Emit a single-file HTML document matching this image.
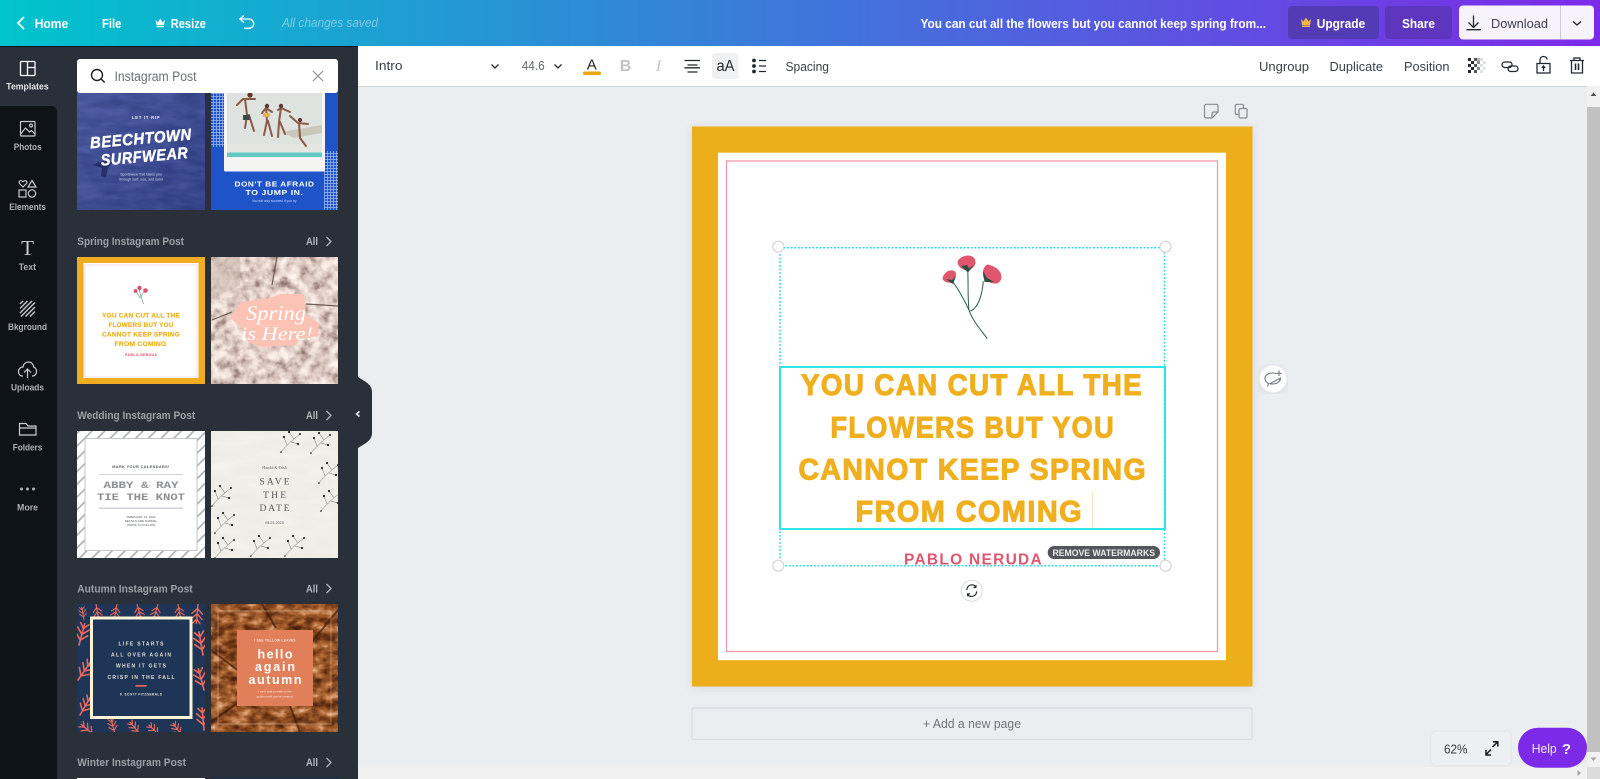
<!DOCTYPE html>
<html lang="en">
<head>
<meta charset="utf-8">
<title>You can cut all the flowers</title>
<style>
html,body{margin:0;padding:0;width:1600px;height:779px;overflow:hidden;background:#ebeef1}
svg{display:block;font-family:"Liberation Sans",sans-serif}
.b{font-weight:700}
.rail{font-size:9.5px;font-weight:700;fill:#aeb2b7}
.sec{font-size:11px;font-weight:700;fill:#9ca1a7}
.top{font-size:13px;font-weight:700;fill:#fff}
.tb{font-size:13px;fill:#3a4149}
.ic{fill:none;stroke:#c9ccd0;stroke-width:1.2}
.k{fill:none;stroke:#22282e;stroke-width:1.3}
</style>
</head>
<body>
<svg xmlns="http://www.w3.org/2000/svg" width="1600" height="779" viewBox="0 0 1600 779">
<defs>
<linearGradient id="tg" x1="0" x2="1" y1="0" y2="0"><stop offset="0" stop-color="#00c4cc"/><stop offset="1" stop-color="#7d2ae8"/></linearGradient>
<linearGradient id="wshade" x1="0" x2="1" y1="0" y2="1"><stop offset="0" stop-color="#5a68ac" stop-opacity=".3"/><stop offset="1" stop-color="#1d2a72" stop-opacity=".35"/></linearGradient>
<filter id="blossom" x="0" y="0" width="100%" height="100%" color-interpolation-filters="sRGB"><feTurbulence type="fractalNoise" baseFrequency=".1" numOctaves="3" seed="7"/><feColorMatrix type="matrix" values="1 0 0 0 0 1 0 0 0 0 1 0 0 0 0 0 0 0 0 1"/><feComponentTransfer><feFuncR type="table" tableValues=".5 .6 .82 .94 1 1"/><feFuncG type="table" tableValues=".4 .5 .74 .88 .96 1"/><feFuncB type="table" tableValues=".38 .47 .71 .85 .94 .98"/></feComponentTransfer></filter>
<filter id="bark" x="0" y="0" width="100%" height="100%" color-interpolation-filters="sRGB"><feTurbulence type="fractalNoise" baseFrequency=".08 .12" numOctaves="3" seed="11"/><feColorMatrix type="matrix" values="1 0 0 0 0 1 0 0 0 0 1 0 0 0 0 0 0 0 0 1"/><feComponentTransfer><feFuncR type="table" tableValues=".22 .3 .48 .68 .85 1"/><feFuncG type="table" tableValues=".09 .13 .25 .4 .62 .92"/><feFuncB type="table" tableValues=".03 .05 .1 .2 .45 .82"/></feComponentTransfer></filter>
<filter id="wave" x="0" y="0" width="100%" height="100%" color-interpolation-filters="sRGB"><feTurbulence type="fractalNoise" baseFrequency=".04 .12" numOctaves="3" seed="3"/><feColorMatrix type="matrix" values="1 0 0 0 0 1 0 0 0 0 1 0 0 0 0 0 0 0 0 1"/><feComponentTransfer><feFuncR type="table" tableValues=".16 .2 .25 .31 .38"/><feFuncG type="table" tableValues=".22 .26 .31 .36 .43"/><feFuncB type="table" tableValues=".46 .52 .58 .64 .7"/></feComponentTransfer></filter>
<filter id="paper" x="0" y="0" width="100%" height="100%" color-interpolation-filters="sRGB"><feTurbulence type="fractalNoise" baseFrequency=".03 .1" numOctaves="2" seed="5"/><feColorMatrix type="matrix" values="1 0 0 0 0 1 0 0 0 0 1 0 0 0 0 0 0 0 0 1"/><feComponentTransfer><feFuncR type="table" tableValues=".92 .94 .97"/><feFuncG type="table" tableValues=".92 .94 .96"/><feFuncB type="table" tableValues=".89 .91 .94"/></feComponentTransfer></filter>
<filter id="sh" x="-5%" y="-5%" width="110%" height="110%"><feDropShadow dx="0" dy="1" stdDeviation="4" flood-color="#3b4a5a" flood-opacity=".14"/></filter>
<pattern id="grid" width="3" height="3" patternUnits="userSpaceOnUse"><rect width="3" height="3" fill="#1e54c8"/><path d="M0 .5H3M.5 0V3" stroke="#9db9ee" stroke-width=".7"/></pattern>
<pattern id="stripes" width="9" height="9" patternUnits="userSpaceOnUse" patternTransform="rotate(45)"><rect width="9" height="9" fill="#fff"/><rect width="1.700" height="9" fill="#aeb1b6"/></pattern>
<g id="sprig"><path d="M0 22C6 15 11 10 20 3M7 14L4 6M11 11L18 13M14 8L9 1" fill="none" stroke="#6b6e70" stroke-width=".5"/><g fill="#222527"><circle cx="4" cy="6" r="1.100"/><circle cx="18" cy="13" r="1.100"/><circle cx="9" cy="1" r="1.100"/><circle cx="20" cy="3" r="1"/><circle cx="1" cy="21" r=".8"/></g></g>
<g id="twig"><path d="M0 0V-26M0 -6L-7 -13M0 -6L7 -13M0 -13L-7 -20M0 -13L7 -20M0 -20L-5 -26M0 -20L5 -26" fill="none" stroke="#e8685c" stroke-width="1.900" stroke-linecap="round"/></g>
</defs>

<!-- Workspace -->
<rect width="1600" height="779" fill="#ebeef1"/>

<!-- Top bar -->
<rect width="1600" height="46" fill="url(#tg)"/>
<path d="M24 17L18 23L24 29" fill="none" stroke="#fff" stroke-width="1.700"/>
<text class="top" x="34.700" y="28" textLength="33.600" lengthAdjust="spacingAndGlyphs">Home</text>
<text class="top" x="102" y="28" textLength="19.400" lengthAdjust="spacingAndGlyphs">File</text>
<path d="M155.500 19.500L157.800 22.500L160.200 18.500L162.600 22.500L165 19.500L164 25H156.500Z" fill="#fff"/><rect x="156.500" y="25.800" width="7.500" height="1.400" fill="#fff"/>
<text class="top" x="170.700" y="28" textLength="35.300" lengthAdjust="spacingAndGlyphs">Resize</text>
<path d="M244 15.500L239.800 19L244 22.500M240 19H248.500C251.500 19 253.700 21 253.700 23.700C253.700 26.300 251.500 28.300 248.500 28.300H244" fill="none" stroke="#fff" stroke-width="1.300"/>
<text x="282" y="27" font-size="13" font-style="italic" fill="#fff" fill-opacity=".42" textLength="96" lengthAdjust="spacingAndGlyphs">All changes saved</text>
<text class="top" x="920.500" y="28" textLength="345.500" lengthAdjust="spacingAndGlyphs">You can cut all the flowers but you cannot keep spring from...</text>
<rect x="1288" y="6" width="91" height="33" rx="4" fill="#543bb6"/>
<path d="M1301 19L1303.500 21.500L1306 17.500L1308.500 21.500L1311 19L1310 25H1302Z" fill="#f5b73b"/><rect x="1302" y="25.500" width="8" height="1.500" fill="#f5b73b"/>
<text class="top" x="1316.700" y="28" textLength="48.500" lengthAdjust="spacingAndGlyphs">Upgrade</text>
<rect x="1385" y="6" width="67" height="33" rx="4" fill="#5e35bd"/>
<text class="top" x="1402" y="28" textLength="33" lengthAdjust="spacingAndGlyphs">Share</text>
<rect x="1459" y="5.500" width="135" height="34" rx="4" fill="#f6f3fd"/>
<path d="M1560.500 5.500V39.500" stroke="#cfc9d8"/>
<path d="M1473.500 15.500V27M1468.500 22.500L1473.500 27.500L1478.500 22.500M1466.500 29.700H1481" fill="none" stroke="#22282e" stroke-width="1.300"/>
<text x="1491" y="28" font-size="13" fill="#3d3f50" textLength="57" lengthAdjust="spacingAndGlyphs">Download</text>
<path d="M1573 21.500L1577 25L1581 21.500" fill="none" stroke="#22282e" stroke-width="1.400"/>

<!-- Panel -->
<rect x="0" y="46" width="358" height="733" fill="#293039"/>
<rect x="0" y="46" width="358" height="1" fill="#10141a"/>
<path d="M0 106H51C54.500 106 57 108.500 57 112V779H0Z" fill="#0e1318"/>

<!-- Rail -->
<g fill="none" stroke="#fff" stroke-width="1.300"><rect x="20.500" y="61.500" width="14.500" height="14" rx="1"/><path d="M27.500 61.500V75.500M27.500 67.500H35"/></g>
<text class="rail" style="fill:#e6e8ea" x="6.300" y="89.500" textLength="42.400" lengthAdjust="spacingAndGlyphs">Templates</text>
<g class="ic"><rect x="20.500" y="121.500" width="14.500" height="14.500" rx="1"/><circle cx="31" cy="125.500" r="1.500"/><path d="M20.500 134L25.500 128L29.500 132L31.500 130.500L35 134"/></g>
<text class="rail" x="13.700" y="150" textLength="28" lengthAdjust="spacingAndGlyphs">Photos</text>
<g class="ic"><path d="M23 187L19.500 183.500C18 181.500 20.500 179.500 23 181.700C25.500 179.500 28 181.500 26.500 183.500Z"/><path d="M32 180.500L36 187H28Z"/><rect x="19" y="190" width="7" height="7"/><circle cx="32" cy="193.500" r="3.700"/></g>
<text class="rail" x="9.300" y="210" textLength="36.700" lengthAdjust="spacingAndGlyphs">Elements</text>
<text x="27.500" y="255" text-anchor="middle" font-size="21" font-family="Liberation Serif,serif" fill="#c9ccd0">T</text>
<text class="rail" x="18.700" y="270" textLength="17.300" lengthAdjust="spacingAndGlyphs">Text</text>
<path d="M20 304L23 301M20 308.500L27.500 301M20 313L32 301M21 316.500L35 302.500M25.500 316.500L35 307M30 316.500L35 311.500" stroke="#bdc0c4" stroke-width="1.500"/>
<text class="rail" x="8" y="330" textLength="39" lengthAdjust="spacingAndGlyphs">Bkground</text>
<path class="ic" d="M23 376H22.500C19.500 376 18.500 373.500 18.500 371.500C18.500 369 20.500 367 23 367C23.500 363.500 26 362 28.500 362C31.500 362 33.500 364.500 33.700 367C35.500 367.500 36.500 369.500 36.500 371.500C36.500 374 35 376 32.500 376H32M27.500 378V369M24 372.500L27.500 369L31 372.500"/>
<text class="rail" x="11" y="390.500" textLength="33" lengthAdjust="spacingAndGlyphs">Uploads</text>
<path class="ic" d="M19.500 435V423.500H26L28 426H36V435Z"/><path class="ic" d="M19.500 428H36"/>
<text class="rail" x="12.700" y="450.500" textLength="29.600" lengthAdjust="spacingAndGlyphs">Folders</text>
<g fill="#aeb2b7"><circle cx="21.500" cy="489" r="1.500"/><circle cx="27.500" cy="489" r="1.500"/><circle cx="33.500" cy="489" r="1.500"/></g>
<text class="rail" x="17" y="510.500" textLength="21" lengthAdjust="spacingAndGlyphs">More</text>

<!-- Thumb: Beechtown -->
<svg x="77" y="85" width="128" height="125" viewBox="77 85 128 125">
<rect x="77" y="85" width="128" height="125" filter="url(#wave)"/>
<rect x="77" y="85" width="128" height="125" fill="url(#wshade)"/>
<text x="146" y="119" text-anchor="middle" font-size="4.500" class="b" fill="#e6e8f2" letter-spacing=".6">LET IT RIP</text>
<path d="M92 165L103 161L113 162L108 167L106 178L101 176L102 168Z" fill="#262f66"/>
<g transform="rotate(-5 141 140)" fill="#fff" stroke="#fff" stroke-width=".4" font-style="italic" class="b"><text x="90" y="144" font-size="16" letter-spacing=".6" textLength="102" lengthAdjust="spacingAndGlyphs">BEECHTOWN</text><text x="99" y="162" font-size="16" letter-spacing=".6" textLength="88" lengthAdjust="spacingAndGlyphs">SURFWEAR</text></g>
<g font-size="3.600" fill="#d5d8e8" text-anchor="middle"><text x="141" y="175.500">Sportswear that takes you</text><text x="141" y="180.500">through surf, sea, and sand</text></g>
</svg>

<!-- Thumb: Jump -->
<svg x="211" y="85" width="127" height="125" viewBox="211 85 127 125">
<rect x="211" y="85" width="127" height="125" fill="#1e54c8"/>
<rect x="211" y="85" width="14" height="62" fill="url(#grid)"/>
<rect x="324" y="151" width="14" height="59" fill="url(#grid)"/>
<rect x="224" y="85" width="101" height="86.500" rx="1.500" fill="#f4f5f3"/>
<rect x="227" y="85" width="95" height="72" fill="#dee3e0"/>
<rect x="227" y="144" width="95" height="9" fill="#e6e6e0"/>
<rect x="227" y="152.500" width="95" height="4.500" fill="#62c9c2"/>
<path d="M282 132L322 125V133L294 138Z" fill="#c9c8ba"/>
<g fill="none" stroke="#8a5a45" stroke-width="2" stroke-linecap="round"><path d="M237 105L243 99H255M245 99L247 115M247 115L245 128M249 115L254 131"/><path d="M262 113L266 108L272 112M266 108L267 121L264 135M268 121L272 136"/><path d="M278 110L281 108L290 112M281 108L279 122L278 137M280 122L285 134"/><path d="M290 116L298 123L308 124M299 123L300 138L306 146"/></g>
<g fill="#5c3a2d"><circle cx="250" cy="95" r="2.700"/><circle cx="267" cy="106" r="2.200"/><circle cx="281" cy="106" r="2.200"/><circle cx="300" cy="120" r="2.100"/></g>
<rect x="243" y="115" width="7" height="5" fill="#3f4a4a"/><rect x="263" y="113" width="7" height="4" fill="#e3b44d"/>
<g class="b" fill="#fff" text-anchor="middle"><text x="274.500" y="186.500" font-size="7.500" letter-spacing=".5" textLength="80" lengthAdjust="spacingAndGlyphs">DON'T BE AFRAID</text><text x="274.500" y="195" font-size="7.500" letter-spacing=".5" textLength="58" lengthAdjust="spacingAndGlyphs">TO JUMP IN.</text></g>
<text x="274.500" y="202" font-size="3.300" fill="#cbd7f4" text-anchor="middle">You will only succeed if you try.</text>
</svg>

<!-- Search -->
<rect x="77" y="59" width="261" height="34" rx="3" fill="#fff"/>
<circle cx="97" cy="75" r="5.500" fill="none" stroke="#1c2127" stroke-width="1.400"/><path d="M101 79L104.700 82.500" stroke="#1c2127" stroke-width="1.500"/>
<text x="114.500" y="81" font-size="13.500" fill="#6c7177" textLength="82" lengthAdjust="spacingAndGlyphs">Instagram Post</text>
<path d="M313 71L323 81M323 71L313 81" stroke="#8b9096" stroke-width="1.200"/>

<!-- Section headers -->
<g>
<text class="sec" x="77.300" y="245" textLength="106.700" lengthAdjust="spacingAndGlyphs">Spring Instagram Post</text>
<text class="sec" x="77.300" y="419" textLength="118" lengthAdjust="spacingAndGlyphs">Wedding Instagram Post</text>
<text class="sec" x="77.300" y="592.500" textLength="115.400" lengthAdjust="spacingAndGlyphs">Autumn Instagram Post</text>
<text class="sec" x="77.300" y="766" textLength="108.700" lengthAdjust="spacingAndGlyphs">Winter Instagram Post</text>
<g class="sec" style="fill:#b4b8bd"><text x="306" y="245" textLength="12" lengthAdjust="spacingAndGlyphs">All</text><text x="306" y="419" textLength="12" lengthAdjust="spacingAndGlyphs">All</text><text x="306" y="592.500" textLength="12" lengthAdjust="spacingAndGlyphs">All</text><text x="306" y="766" textLength="12" lengthAdjust="spacingAndGlyphs">All</text></g>
<g fill="none" stroke="#b4b8bd" stroke-width="1.300"><path d="M326.500 237L331 241.500L326.500 246"/><path d="M326.500 411L331 415.500L326.500 420"/><path d="M326.500 584L331 588.500L326.500 593"/><path d="M326.500 758L331 762.500L326.500 767"/></g>
</g>

<!-- Thumb: Spring quote -->
<rect x="77" y="257" width="128" height="127" fill="#efad1f"/>
<rect x="83.500" y="263" width="115" height="115" fill="#fff"/>
<rect x="85" y="265" width="112" height="112" fill="none" stroke="#f0dde3" stroke-width="1"/>
<path d="M140 293L143.500 304M140 293L139 288M140 298L136 291M140 298L145 290" fill="none" stroke="#6d9a8c" stroke-width=".7"/>
<g fill="#dd4f69"><circle cx="139.500" cy="288" r="2.200"/><circle cx="135.500" cy="291" r="1.900"/><circle cx="145.500" cy="290.500" r="2.300"/></g>
<g class="b" fill="#efb31f" stroke="#efb31f" stroke-width=".2" font-size="6.700" letter-spacing=".2"><text x="102" y="317.500" textLength="78" lengthAdjust="spacingAndGlyphs">YOU CAN CUT ALL THE</text><text x="108.500" y="327" textLength="65" lengthAdjust="spacingAndGlyphs">FLOWERS BUT YOU</text><text x="102" y="336.500" textLength="78" lengthAdjust="spacingAndGlyphs">CANNOT KEEP SPRING</text><text x="114.500" y="346" textLength="52" lengthAdjust="spacingAndGlyphs">FROM COMING</text></g>
<text x="125" y="356" font-size="3.600" class="b" fill="#dd4f69" textLength="32" lengthAdjust="spacing">PABLO NERUDA</text>

<!-- Thumb: Spring is here -->
<svg x="211" y="257" width="127" height="127" viewBox="211 257 127 127">
<rect x="211" y="257" width="127" height="127" filter="url(#blossom)"/>
<path d="M211 257H240V285L211 300Z" fill="#c9b5ab" fill-opacity=".5"/>
<path d="M277 257L272 285M306 304L338 306M212 320L232 312" stroke="#4b3a34" stroke-width="1.200" fill="none" stroke-opacity=".8"/>
<path d="M241 302L270 298L280 294L304 294L306 315L319 323L318 336L300 339L296 345L262 347L248 342L242 328L230 318Z" fill="#fcc3b5"/>
<g fill="#fff" font-family="Liberation Serif,serif" font-style="italic"><text x="246" y="320" font-size="21" textLength="60" lengthAdjust="spacingAndGlyphs">Spring</text><text x="241" y="340" font-size="19" textLength="72" lengthAdjust="spacingAndGlyphs">is Here!</text></g>
</svg>

<!-- Thumb: Wedding 1 -->
<rect x="77" y="431" width="128" height="127" fill="url(#stripes)"/>
<rect x="85" y="438.500" width="112" height="112" fill="#fff" stroke="#c3c5c9"/>
<text x="141" y="468" text-anchor="middle" font-size="3.800" class="b" fill="#54585c" letter-spacing=".4">MARK YOUR CALENDARS!</text>
<rect x="99" y="474" width="84" height="1" fill="#d0d2d5"/>
<g fill="#8d9196" class="b" font-family="Liberation Mono,monospace" text-anchor="middle"><text x="141" y="488" font-size="10" textLength="75" lengthAdjust="spacingAndGlyphs">ABBY &amp; RAY</text><text x="141" y="500" font-size="10" textLength="88" lengthAdjust="spacingAndGlyphs">TIE THE KNOT</text></g>
<rect x="99" y="507.500" width="84" height="1.500" fill="#d0d2d5"/>
<g fill="#54585c" font-size="3" text-anchor="middle"><text x="141" y="518">FEBRUARY 14, 2020</text><text x="141" y="522">DETAILS ARE FORMAL</text><text x="141" y="526">WHITE TO FOLLOW</text></g>

<!-- Thumb: Save the date -->
<svg x="211" y="431" width="127" height="127" viewBox="211 431 127 127">
<rect x="211" y="431" width="127" height="127" filter="url(#paper)"/>
<use href="#sprig" transform="translate(280 431)"/><use href="#sprig" transform="translate(310 432)"/>
<use href="#sprig" transform="translate(318 462)"/><use href="#sprig" transform="translate(320 490)"/>
<use href="#sprig" transform="translate(211 485)"/><use href="#sprig" transform="translate(214 512)"/>
<use href="#sprig" transform="translate(250 535)"/><use href="#sprig" transform="translate(214 537)"/><use href="#sprig" transform="translate(284 535)"/>
<text x="274.500" y="469" text-anchor="middle" font-size="4" fill="#5a5c5c" font-family="Liberation Serif,serif">Harold &amp; Trish</text>
<g fill="#55585a" font-size="9.500" text-anchor="middle" font-family="Liberation Serif,serif"><text x="274.500" y="484.500" textLength="30" lengthAdjust="spacing">SAVE</text><text x="274.500" y="498" textLength="23" lengthAdjust="spacing">THE</text><text x="274.500" y="511" textLength="30" lengthAdjust="spacing">DATE</text></g>
<text x="274.500" y="524" text-anchor="middle" font-size="3.800" fill="#5a5c5c">08.25.2020</text>
</svg>

<!-- Thumb: Autumn 1 -->
<svg x="77" y="604" width="128" height="128" viewBox="77 604 128 128">
<rect x="77" y="604" width="128" height="128" fill="#1f3557"/>
<g><use href="#twig" transform="translate(96 604) rotate(170) scale(.6)"/><use href="#twig" transform="translate(117 604) rotate(190) scale(.6)"/><use href="#twig" transform="translate(137 604) rotate(165) scale(.6)"/><use href="#twig" transform="translate(158 604) rotate(195) scale(.6)"/><use href="#twig" transform="translate(178 604) rotate(170) scale(.6)"/><use href="#twig" transform="translate(198 604) rotate(185) scale(.75)"/>
<use href="#twig" transform="translate(79 645) rotate(15) scale(.85)"/><use href="#twig" transform="translate(78 680) rotate(35) scale(.85)"/><use href="#twig" transform="translate(80 715) rotate(30) scale(.8)"/><use href="#twig" transform="translate(84 620) rotate(-10) scale(.5)"/>
<use href="#twig" transform="translate(203 655) rotate(-10) scale(.9)"/><use href="#twig" transform="translate(204 690) rotate(-15) scale(.85)"/><use href="#twig" transform="translate(204 730) rotate(-5) scale(.85)"/>
<use href="#twig" transform="translate(95 736) rotate(-50) scale(.7)"/><use href="#twig" transform="translate(115 734) rotate(-15) scale(.6)"/><use href="#twig" transform="translate(140 734) rotate(-40) scale(.6)"/><use href="#twig" transform="translate(160 736) rotate(-45) scale(.6)"/><use href="#twig" transform="translate(182 736) rotate(-35) scale(.6)"/></g>
<rect x="91.500" y="618" width="99.500" height="99.500" fill="#1f3557" stroke="#fbf3d5" stroke-width="3"/>
<g class="b" fill="#e4e1d2" font-size="5" text-anchor="middle"><text x="141" y="645.500" textLength="45" lengthAdjust="spacing">LIFE STARTS</text><text x="141" y="656.700" textLength="60" lengthAdjust="spacing">ALL OVER AGAIN</text><text x="141" y="667.700" textLength="50" lengthAdjust="spacing">WHEN IT GETS</text><text x="141" y="679" textLength="67" lengthAdjust="spacing">CRISP IN THE FALL</text></g>
<rect x="135.500" y="685" width="11" height="1.700" fill="#e8685c"/>
<text x="141" y="695.500" class="b" font-size="3.200" fill="#e4e1d2" text-anchor="middle" textLength="42" lengthAdjust="spacing">F. SCOTT FITZGERALD</text>
</svg>

<!-- Thumb: Autumn 2 -->
<svg x="211" y="604" width="127" height="128" viewBox="211 604 127 128">
<rect x="211" y="604" width="127" height="128" filter="url(#bark)"/>
<path d="M211 650L240 672M338 610L305 650M262 604L276 628M300 732L290 706M211 722L236 704" stroke="#3c1a09" stroke-width="2" stroke-opacity=".7" fill="none"/>
<rect x="218" y="611" width="113" height="113" fill="none" stroke="#f5e3d2" stroke-opacity=".55" stroke-width=".7"/>
<rect x="237" y="630" width="76" height="76" fill="#e07f5a"/>
<text x="275" y="641.500" text-anchor="middle" font-size="3.200" class="b" fill="#fbe8de" letter-spacing=".3">I SEE YELLOW LEAVES</text>
<g fill="#fff" font-size="12.500" text-anchor="middle" class="b"><text x="275" y="658.500" textLength="35" lengthAdjust="spacing">hello</text><text x="275" y="671" textLength="40" lengthAdjust="spacing">again</text><text x="275" y="684" textLength="53" lengthAdjust="spacing">autumn</text></g>
<g fill="#fbe8de" font-size="3" text-anchor="middle"><text x="275" y="692.500">I can't wait to walk on the</text><text x="275" y="697.500">golden path you've created.</text></g>
</svg>

<!-- Winter tops -->
<rect x="77" y="778" width="128" height="1" fill="#fff"/><rect x="211" y="778" width="127" height="1" fill="#16304c"/>

<!-- Collapse handle -->
<path d="M358 377L366 382C370 385 372 388 372 392V433C372 437 370 440 366 443L358 448Z" fill="#293039"/>
<path d="M359.500 411.500L356.500 414L359.500 416.500" fill="none" stroke="#eef0f2" stroke-width="1.500"/>

<!-- Toolbar -->
<rect x="358" y="46" width="1242" height="40" fill="#fff"/>
<rect x="358" y="86" width="1229" height="1" fill="#d2d5d8"/>
<text class="tb" x="375" y="70" textLength="27.500" lengthAdjust="spacingAndGlyphs">Intro</text>
<path d="M491.500 64.500L495 68L498.500 64.500" class="k"/>
<text x="521.700" y="70" font-size="12.500" fill="#666b70" textLength="23" lengthAdjust="spacingAndGlyphs">44.6</text>
<path d="M554.500 64.500L558 68L561.500 64.500" class="k"/>
<text x="591.700" y="69.500" text-anchor="middle" font-size="15" fill="#1c2127">A</text>
<rect x="583" y="71.500" width="18" height="3.500" rx="1.500" fill="#e8a711"/>
<text x="625.500" y="71" text-anchor="middle" font-size="16" class="b" fill="#c0c2c4">B</text>
<text x="658.500" y="71" text-anchor="middle" font-size="16" font-style="italic" font-family="Liberation Serif,serif" fill="#c0c2c4">I</text>
<path d="M684.500 60.500H700M687.500 65H697.500M684.500 67.800H700M687.500 72H697.500" stroke="#22282e" stroke-width="1.300"/>
<rect x="712" y="53" width="26.500" height="26" rx="3" fill="#f0f1f2"/>
<text x="716.500" y="71" font-size="15.500" fill="#22282e" textLength="18" lengthAdjust="spacingAndGlyphs">aA</text>
<g fill="#22282e"><circle cx="754" cy="60.500" r="1.900"/><circle cx="754" cy="66" r="1.900"/><circle cx="754" cy="71.500" r="1.900"/></g>
<path d="M759 60.500H766M759 66H766M759 71.500H766" stroke="#22282e" stroke-width="1.300"/>
<text class="tb" x="785.500" y="71" textLength="43.500" lengthAdjust="spacingAndGlyphs">Spacing</text>
<text class="tb" x="1259" y="71" textLength="50" lengthAdjust="spacingAndGlyphs">Ungroup</text>
<text class="tb" x="1329.500" y="71" textLength="53.500" lengthAdjust="spacingAndGlyphs">Duplicate</text>
<text class="tb" x="1404" y="71" textLength="45.500" lengthAdjust="spacingAndGlyphs">Position</text>
<g fill="#22282e"><rect x="1468" y="58" width="3" height="3"/><rect x="1474" y="58" width="3" height="3" fill="#555"/><rect x="1471" y="61" width="3" height="3"/><rect x="1477" y="61" width="3" height="3" fill="#8b8e92"/><rect x="1468" y="64" width="3" height="3"/><rect x="1474" y="64" width="3" height="3" fill="#555"/><rect x="1471" y="67" width="3" height="3"/><rect x="1477" y="67" width="3" height="3" fill="#8b8e92"/><rect x="1468" y="70" width="3" height="3"/><rect x="1474" y="70" width="3" height="3" fill="#555"/></g>
<g fill="#dfe0e1"><rect x="1480" y="58" width="3" height="3"/><rect x="1477" y="58" width="3" height="3" fill="#b5b7b9"/><rect x="1483" y="61" width="2.500" height="3"/><rect x="1480" y="64" width="3" height="3"/><rect x="1483" y="67" width="2.500" height="3"/><rect x="1480" y="70" width="3" height="3"/></g>
<g class="k"><rect x="1502" y="62" width="10" height="5.500" rx="2.700"/><rect x="1508" y="66" width="10" height="5.500" rx="2.700"/></g>
<g class="k"><rect x="1537" y="63.500" width="13" height="9.500"/><path d="M1540 63.500V60C1540 57.500 1541.700 56.500 1543.500 56.500C1545.300 56.500 1547 57.500 1547 59.500"/><path d="M1543.500 71V66.500M1541.800 68L1543.500 66L1545.200 68"/></g>
<g class="k"><path d="M1570 60.500H1584M1574 60.500V58H1580V60.500M1571.500 60.500V73H1582.500V60.500"/><path d="M1575.500 63.500V70M1578.500 63.500V70" stroke-width="1.600"/></g>

<!-- Page actions -->
<g fill="none" stroke="#878c92" stroke-width="1.200"><path d="M1212 118H1206.500C1205 118 1204.500 117.300 1204.500 116V106C1204.500 104.700 1205 104.300 1206.500 104.300H1216C1217.300 104.300 1218 104.800 1218 106V112ZM1212 118V114C1212 112.700 1212.700 112 1214 112H1218"/><rect x="1239" y="108.500" width="8" height="9.500" rx="1.500"/><path d="M1239 114.500H1237C1236 114.500 1235.300 113.800 1235.300 112.800V106C1235.300 105 1236 104.300 1237 104.300H1242C1243 104.300 1243.500 105 1243.500 106V108.500"/></g>

<!-- Design -->
<rect x="692" y="126.500" width="560.500" height="560" fill="#edae1f" filter="url(#sh)"/>
<rect x="718" y="152.700" width="508" height="507.500" fill="#fff"/>
<rect x="726.500" y="161" width="491" height="490.500" fill="none" stroke="#ee94a3" stroke-width="1.200"/>

<!-- Flower -->
<g fill="none" stroke="#2a5c4b" stroke-width="1" stroke-linecap="round"><path d="M987 338.300C981 330 972 320 969 310C967.500 298 968.500 282 967.700 270"/><path d="M969 310C965 302 960 291 953.300 282.700"/><path d="M970.700 311C979 307 982 295 983.300 281.700"/></g>
<path d="M957.500 262C958.500 258 964 255.500 968 255.500C972 255.500 976 258 975.500 263C975 267 971 269 968 271C964 270 958 268 957.500 262Z" fill="#e0566e"/>
<path d="M942.500 279C943 275 946 271 950 270.500C953 270 956 271 956 274C956 278 954 281 952 283C948 283 944 282 942.500 279Z" fill="#e0566e"/>
<path d="M983 271C984 267 986 264.500 988 264.500C992 265.500 998 268 1000 272C1003 277 1001 282 997 283.500C991 284 984 281 983 276Z" fill="#e0566e"/>
<path d="M961 266L968 272.500L974 265L969 268.500L967 265ZM946 279L953 284L956 276L952 280ZM983 271L984.500 282L994 282L987 278Z" fill="#24523f"/>

<!-- Quote text -->
<g class="b" fill="#f0af1e" stroke="#f0af1e" stroke-width="1.100" font-size="30" letter-spacing="1.500">
<text x="801" y="395" textLength="342" lengthAdjust="spacingAndGlyphs">YOU CAN CUT ALL THE</text>
<text x="830.500" y="437.300" textLength="284.500" lengthAdjust="spacingAndGlyphs">FLOWERS BUT YOU</text>
<text x="798.500" y="479.300" textLength="348.500" lengthAdjust="spacingAndGlyphs">CANNOT KEEP SPRING</text>
<text x="855.500" y="521.700" textLength="227.500" lengthAdjust="spacingAndGlyphs">FROM COMING</text>
</g>
<rect x="1092" y="492" width="1" height="36" fill="#f7e4c0"/>
<text x="904" y="564.300" font-size="15.500" class="b" fill="#e0556f" textLength="137.700" lengthAdjust="spacing">PABLO NERUDA</text>

<!-- Selection -->
<rect x="780" y="247.700" width="384.500" height="318" fill="none" stroke="#1fdde3" stroke-width="1.500" stroke-dasharray="1.800 1.800"/>
<rect x="780" y="367" width="385" height="162" fill="none" stroke="#2ee4e8" stroke-width="2"/>
<g fill="#fff" stroke="#d3d5d7" stroke-width="1.200"><circle cx="778.300" cy="246.700" r="5.500"/><circle cx="1165.500" cy="246.700" r="5.500"/><circle cx="778.300" cy="565.700" r="5.500"/><circle cx="1165.500" cy="565.700" r="5.500"/></g>
<rect x="1047.700" y="546" width="112.300" height="13" rx="6.500" fill="#55565b"/>
<text x="1052.500" y="556" font-size="9" class="b" fill="#eeeeef" textLength="102.500" lengthAdjust="spacingAndGlyphs">REMOVE WATERMARKS</text>
<circle cx="971.700" cy="590.700" r="10.500" fill="#fff" stroke="#d9dbdd"/>
<path d="M966.800 590C967 586.500 969.500 584.800 972 584.800C973.500 584.800 974.800 585.500 975.800 586.500M976.700 591.300C976.500 594.800 974 596.500 971.500 596.500C970 596.500 968.700 595.800 967.700 594.800" fill="none" stroke="#22282e" stroke-width="1.100"/>
<path d="M976.500 584.500V588H973ZM967 596.800V593.300H970.500Z" fill="#22282e"/>

<!-- Comment -->
<circle cx="1273" cy="379" r="13.500" fill="#fff" filter="url(#sh)"/>
<path d="M1267.500 386.500L1268.500 383.500C1265.700 382 1265 380 1265 378.500C1265 375 1268.500 373 1272.500 373C1274 373 1275 373.200 1276 373.500M1280.500 378C1280.500 381.500 1277 384 1272.500 384C1271.500 384 1270.700 384 1270 383.700Z" fill="none" stroke="#6f757b" stroke-width="1.100"/>
<path d="M1279 370.500V376M1276.300 373.300H1281.700" stroke="#6f757b" stroke-width="1.100"/>

<!-- Add page -->
<rect x="692" y="708" width="560" height="31.500" rx="2" fill="#ebeef1" stroke="#dadee2" stroke-width="1.500"/>
<text x="923" y="728" font-size="13" fill="#70767c" textLength="98" lengthAdjust="spacingAndGlyphs">+ Add a new page</text>

<!-- Scrollbars -->
<rect x="358" y="767" width="1242" height="12" fill="#f1f1f1"/>
<rect x="1587" y="86" width="13" height="681" fill="#f1f1f1"/>
<rect x="1587" y="107" width="13" height="645" fill="#c1c1c1"/>
<path d="M1590.500 96L1593.500 92.500L1596.500 96Z" fill="#505050"/>
<path d="M1590.500 757.500L1593.500 761L1596.500 757.500Z" fill="#a3a3a3"/>
<path d="M1577.500 770L1581 773L1577.500 776Z" fill="#a3a3a3"/>
<rect x="1587" y="767" width="13" height="12" fill="#dcdcdc"/>

<!-- Zoom + Help -->
<rect x="1430.500" y="731" width="81" height="35" rx="6" fill="#edf0f2" stroke="#e3e6e9"/>
<text x="1444" y="753.500" font-size="12.500" fill="#3a4149" textLength="23.500" lengthAdjust="spacingAndGlyphs">62%</text>
<path d="M1486 754.500L1491 749.500M1486 750V755H1491M1492.500 747L1497.500 742M1493 741.800H1497.800V746.500" fill="none" stroke="#15191e" stroke-width="1.500"/>
<rect x="1518" y="727.700" width="69" height="40" rx="20" fill="#7d2ae8"/>
<text x="1531.700" y="753" font-size="13" fill="#f2e9fd" textLength="25" lengthAdjust="spacingAndGlyphs">Help</text>
<text x="1566.500" y="754" font-size="15" class="b" fill="#f6effe" text-anchor="middle">?</text>
</svg>
</body>
</html>
